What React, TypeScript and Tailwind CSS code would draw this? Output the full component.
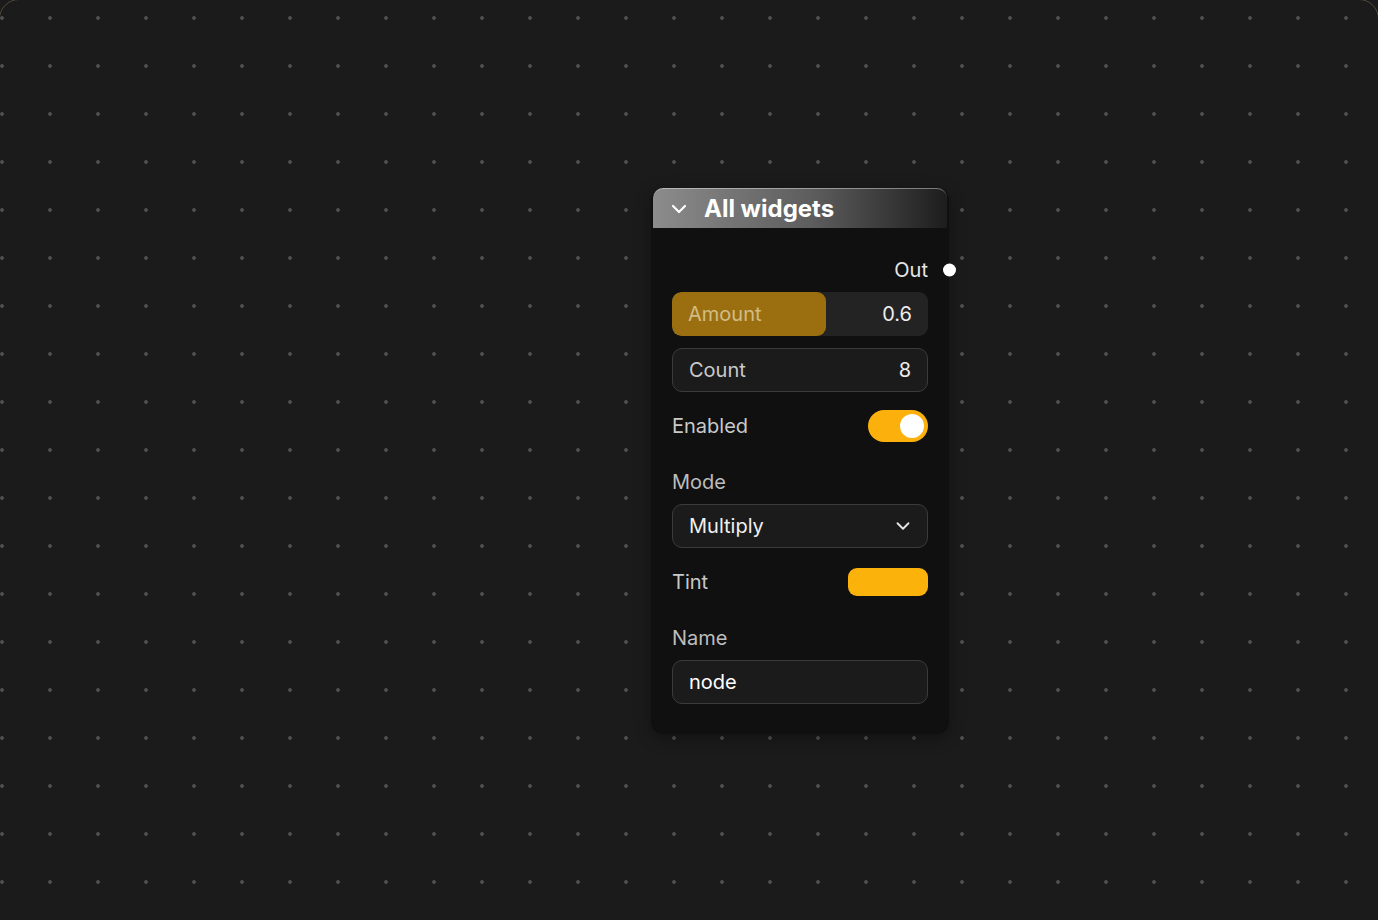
import { ChevronDown } from 'lucide-react';

const font = { fontFamily: 'Inter, "Noto Sans", sans-serif' };

export default function App() {
  return (
    <div className="w-[1378px] h-[920px] overflow-hidden bg-[#1b1b1b]" style={font}>
      <div className="relative -mx-px -mt-px h-[960px] rounded-[20px] border border-[#524a3b] bg-[#1b1b1b] bg-[radial-gradient(circle,#505050_1.5px,transparent_2.2px)] bg-[size:48px_48px] bg-[position:-22px_-6px]">
        {/* node */}
        <div className="absolute left-[651px] top-[188px] w-[298px] rounded-[12px] bg-[#0f100f] shadow-[0_4px_16px_rgba(0,0,0,0.35)]">
          <div className="mx-[2px] flex h-[40px] items-center gap-[13px] rounded-t-[10px] border-t border-white/40 bg-[linear-gradient(to_right,#8c8c8c,#5c5c5c_55%,#1d1d1d)] pl-[14px]">
            <ChevronDown className="h-[24px] w-[24px] text-white" strokeWidth={2.2} />
            <span className="text-[24px] font-bold leading-none text-white">All widgets</span>
          </div>

          <div className="flex flex-col px-[21px] pb-[30px] pt-[20px]">
            <div className="relative flex h-[42px] items-center justify-end">
              <span className="mt-[2px] text-[20px] text-[#e6e6e6]">Out</span>
              <span className="absolute -right-[28px] top-1/2 mt-[1px] h-[13px] w-[13px] -translate-y-1/2 rounded-full bg-white" />
            </div>

            <div className="mt-[2px] flex flex-col gap-[12px]">
              <div className="relative flex h-[44px] items-center justify-between overflow-hidden rounded-[9px] bg-[#232323] px-[16px]">
                <div className="absolute inset-y-0 left-0 w-[60%] rounded-[9px] bg-[#9b6f10]" />
                <span className="relative text-[20px] text-[#d2bd86]">Amount</span>
                <span className="relative text-[20px] text-[#ededed]">0.6</span>
              </div>

              <div className="flex h-[44px] items-center justify-between rounded-[10px] border border-[#3b3b3b] bg-[#1b1b1b] px-[16px]">
                <span className="text-[20px] text-[#c9c9c9]">Count</span>
                <span className="text-[20px] text-[#ededed]">8</span>
              </div>

              <div className="flex h-[44px] items-center justify-between">
                <span className="text-[20px] text-[#c9c9c9]">Enabled</span>
                <div className="flex h-[32px] w-[60px] items-center justify-end rounded-full bg-[#fbb00b] pr-[4px]">
                  <div className="h-[24px] w-[24px] rounded-full bg-white" />
                </div>
              </div>

              <div className="flex flex-col">
                <div className="flex h-[44px] items-center">
                  <span className="text-[20px] text-[#bdbdbd]">Mode</span>
                </div>
                <div className="flex h-[44px] items-center justify-between rounded-[10px] border border-[#3b3b3b] bg-[#1b1b1b] pl-[16px] pr-[13px]">
                  <span className="text-[20px] text-[#f0f0f0]">Multiply</span>
                  <ChevronDown className="h-[22px] w-[22px] text-[#e6e6e6]" strokeWidth={2} />
                </div>
              </div>

              <div className="flex h-[44px] items-center justify-between">
                <span className="text-[20px] text-[#c9c9c9]">Tint</span>
                <div className="h-[28px] w-[80px] rounded-[9px] bg-[#fbb20a]" />
              </div>

              <div className="flex flex-col">
                <div className="flex h-[44px] items-center">
                  <span className="text-[20px] text-[#bdbdbd]">Name</span>
                </div>
                <div className="flex h-[44px] items-center rounded-[10px] border border-[#3b3b3b] bg-[#1b1b1b] px-[16px]">
                  <span className="text-[20px] text-white">node</span>
                </div>
              </div>
            </div>
          </div>
        </div>
      </div>
    </div>
  );
}
